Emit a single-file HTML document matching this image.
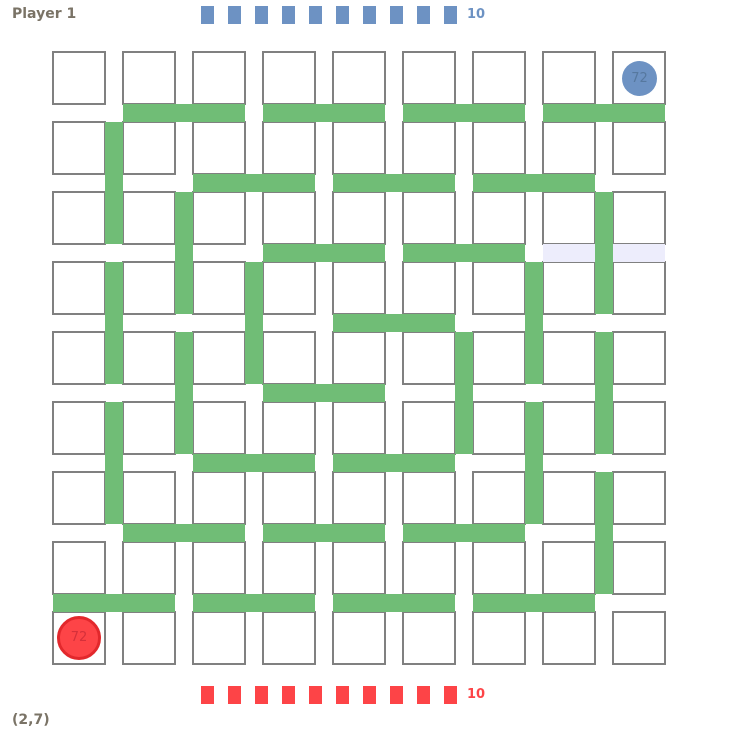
<!DOCTYPE html>
<html><head><meta charset="utf-8"><style>
body{margin:0;width:754px;height:754px;background:#fff;position:relative;overflow:hidden;font-family:"DejaVu Sans","Liberation Sans",sans-serif}
div{position:absolute;box-sizing:border-box}
.c{width:54px;height:54px;border:2px solid #808080;background:#fff}
.h{height:18px;width:122px;background:#70bd76}
.v{width:18px;height:122px;background:#70bd76}
.b{width:13px;height:18px;top:6px;background:#6d92c3}
.r{width:13px;height:18px;top:686px;background:#fd4447}
.t{font-weight:bold;font-size:14px}
</style></head><body>
<div class="t" style="left:12px;top:6px;color:#7a7366">Player 1</div>
<div class="t" style="left:12px;top:712px;color:#7a7366">(2,7)</div>
<div class="b" style="left:201px"></div><div class="b" style="left:228px"></div><div class="b" style="left:255px"></div><div class="b" style="left:282px"></div><div class="b" style="left:309px"></div><div class="b" style="left:336px"></div><div class="b" style="left:363px"></div><div class="b" style="left:390px"></div><div class="b" style="left:417px"></div><div class="b" style="left:444px"></div>
<div class="t" style="left:467px;top:7px;color:#6d92c3;font-size:13px">10</div>
<div class="r" style="left:201px"></div><div class="r" style="left:228px"></div><div class="r" style="left:255px"></div><div class="r" style="left:282px"></div><div class="r" style="left:309px"></div><div class="r" style="left:336px"></div><div class="r" style="left:363px"></div><div class="r" style="left:390px"></div><div class="r" style="left:417px"></div><div class="r" style="left:444px"></div>
<div class="t" style="left:467px;top:687px;color:#fd4447;font-size:13px">10</div>

<div class="c" style="left:52px;top:51px"></div><div class="c" style="left:122px;top:51px"></div><div class="c" style="left:192px;top:51px"></div><div class="c" style="left:262px;top:51px"></div><div class="c" style="left:332px;top:51px"></div><div class="c" style="left:402px;top:51px"></div><div class="c" style="left:472px;top:51px"></div><div class="c" style="left:542px;top:51px"></div><div class="c" style="left:612px;top:51px"></div>
<div class="c" style="left:52px;top:121px"></div><div class="c" style="left:122px;top:121px"></div><div class="c" style="left:192px;top:121px"></div><div class="c" style="left:262px;top:121px"></div><div class="c" style="left:332px;top:121px"></div><div class="c" style="left:402px;top:121px"></div><div class="c" style="left:472px;top:121px"></div><div class="c" style="left:542px;top:121px"></div><div class="c" style="left:612px;top:121px"></div>
<div class="c" style="left:52px;top:191px"></div><div class="c" style="left:122px;top:191px"></div><div class="c" style="left:192px;top:191px"></div><div class="c" style="left:262px;top:191px"></div><div class="c" style="left:332px;top:191px"></div><div class="c" style="left:402px;top:191px"></div><div class="c" style="left:472px;top:191px"></div><div class="c" style="left:542px;top:191px"></div><div class="c" style="left:612px;top:191px"></div>
<div class="c" style="left:52px;top:261px"></div><div class="c" style="left:122px;top:261px"></div><div class="c" style="left:192px;top:261px"></div><div class="c" style="left:262px;top:261px"></div><div class="c" style="left:332px;top:261px"></div><div class="c" style="left:402px;top:261px"></div><div class="c" style="left:472px;top:261px"></div><div class="c" style="left:542px;top:261px"></div><div class="c" style="left:612px;top:261px"></div>
<div class="c" style="left:52px;top:331px"></div><div class="c" style="left:122px;top:331px"></div><div class="c" style="left:192px;top:331px"></div><div class="c" style="left:262px;top:331px"></div><div class="c" style="left:332px;top:331px"></div><div class="c" style="left:402px;top:331px"></div><div class="c" style="left:472px;top:331px"></div><div class="c" style="left:542px;top:331px"></div><div class="c" style="left:612px;top:331px"></div>
<div class="c" style="left:52px;top:401px"></div><div class="c" style="left:122px;top:401px"></div><div class="c" style="left:192px;top:401px"></div><div class="c" style="left:262px;top:401px"></div><div class="c" style="left:332px;top:401px"></div><div class="c" style="left:402px;top:401px"></div><div class="c" style="left:472px;top:401px"></div><div class="c" style="left:542px;top:401px"></div><div class="c" style="left:612px;top:401px"></div>
<div class="c" style="left:52px;top:471px"></div><div class="c" style="left:122px;top:471px"></div><div class="c" style="left:192px;top:471px"></div><div class="c" style="left:262px;top:471px"></div><div class="c" style="left:332px;top:471px"></div><div class="c" style="left:402px;top:471px"></div><div class="c" style="left:472px;top:471px"></div><div class="c" style="left:542px;top:471px"></div><div class="c" style="left:612px;top:471px"></div>
<div class="c" style="left:52px;top:541px"></div><div class="c" style="left:122px;top:541px"></div><div class="c" style="left:192px;top:541px"></div><div class="c" style="left:262px;top:541px"></div><div class="c" style="left:332px;top:541px"></div><div class="c" style="left:402px;top:541px"></div><div class="c" style="left:472px;top:541px"></div><div class="c" style="left:542px;top:541px"></div><div class="c" style="left:612px;top:541px"></div>
<div class="c" style="left:52px;top:611px"></div><div class="c" style="left:122px;top:611px"></div><div class="c" style="left:192px;top:611px"></div><div class="c" style="left:262px;top:611px"></div><div class="c" style="left:332px;top:611px"></div><div class="c" style="left:402px;top:611px"></div><div class="c" style="left:472px;top:611px"></div><div class="c" style="left:542px;top:611px"></div><div class="c" style="left:612px;top:611px"></div>

<div class="h" style="left:123px;top:104px"></div><div class="h" style="left:263px;top:104px"></div><div class="h" style="left:403px;top:104px"></div><div class="h" style="left:543px;top:104px"></div>
<div class="h" style="left:193px;top:174px"></div><div class="h" style="left:333px;top:174px"></div><div class="h" style="left:473px;top:174px"></div>
<div class="h" style="left:263px;top:244px"></div><div class="h" style="left:403px;top:244px"></div><div class="h" style="left:543px;top:244px;background:#ededfc"></div>
<div class="h" style="left:333px;top:314px"></div>
<div class="h" style="left:263px;top:384px"></div>
<div class="h" style="left:193px;top:454px"></div><div class="h" style="left:333px;top:454px"></div>
<div class="h" style="left:123px;top:524px"></div><div class="h" style="left:263px;top:524px"></div><div class="h" style="left:403px;top:524px"></div>
<div class="h" style="left:53px;top:594px"></div><div class="h" style="left:193px;top:594px"></div><div class="h" style="left:333px;top:594px"></div><div class="h" style="left:473px;top:594px"></div>

<div class="v" style="left:105px;top:122px"></div><div class="v" style="left:105px;top:262px"></div><div class="v" style="left:105px;top:402px"></div>
<div class="v" style="left:175px;top:192px"></div><div class="v" style="left:175px;top:332px"></div>
<div class="v" style="left:245px;top:262px"></div>
<div class="v" style="left:455px;top:332px"></div>
<div class="v" style="left:525px;top:262px"></div><div class="v" style="left:525px;top:402px"></div>
<div class="v" style="left:595px;top:192px"></div><div class="v" style="left:595px;top:332px"></div><div class="v" style="left:595px;top:472px"></div>

<div style="left:622px;top:61px;width:35px;height:35px;border-radius:50%;background:#6d92c3;color:#56789f;font-size:13px;text-align:center;line-height:35px">72</div>
<div style="left:57px;top:616px;width:44px;height:44px;border-radius:50%;background:#fd4447;border:3px solid #e2282c;color:#d5303a;font-size:13px;text-align:center;line-height:38px">72</div>
</body></html>
